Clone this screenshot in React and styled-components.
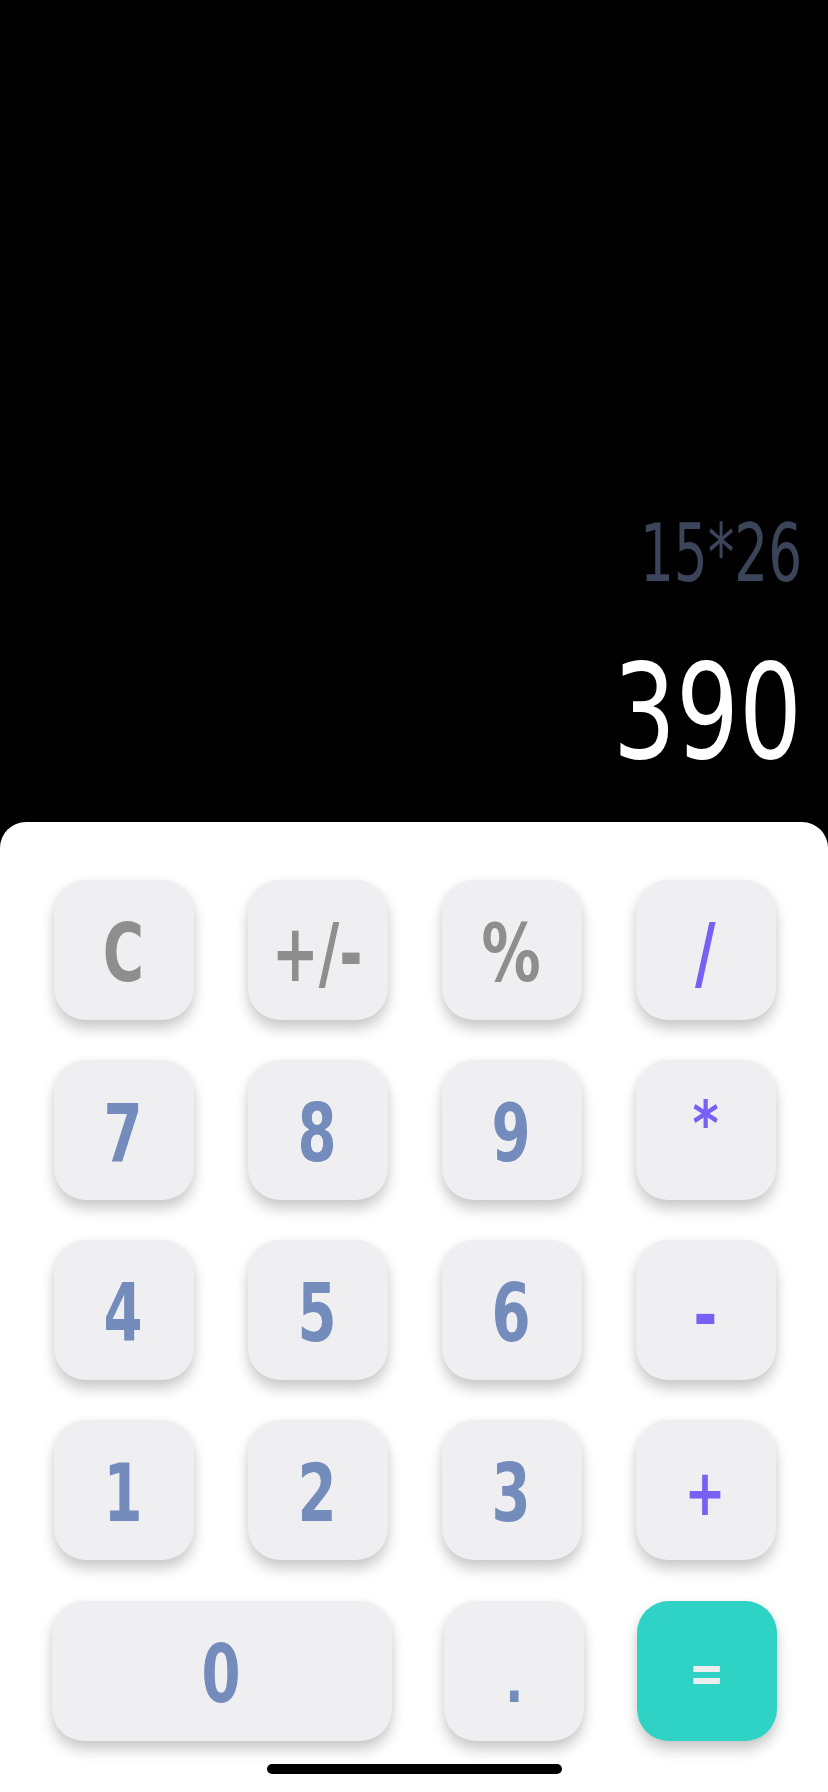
import React from "react";
import styled, { createGlobalStyle } from "styled-components";

const GlobalStyle = createGlobalStyle`
  html, body {
    margin: 0;
    padding: 0;
    background: #000;
  }
  body {
    font-family: "Liberation Sans Narrow", "DejaVu Sans Condensed", "Liberation Sans", sans-serif;
  }
`;

const Screen = styled.div`
  width: 828px;
  height: 1792px;
  background: #000;
  display: flex;
  flex-direction: column;
  overflow: hidden;
`;

// 결과 표시 영역
const Display = styled.div`
  height: 822px;
  box-sizing: border-box;
  display: flex;
  flex-direction: column;
  justify-content: flex-end;
  align-items: flex-end;
  padding: 0 26px 44px 0;
`;

const Expression = styled.div`
  font-size: 80px;
  line-height: 1;
  color: #3b4559;
  margin-bottom: 53px;
  transform: scaleX(0.74);
  transform-origin: right center;
`;

const Result = styled.div`
  font-size: 131px;
  line-height: 1;
  color: #fff;
  transform: scaleX(0.84);
  transform-origin: right center;
`;

const Panel = styled.div`
  flex: 1;
  background: #fff;
  border-radius: 26px 26px 0 0;
  padding-top: 58px;
  display: flex;
  flex-direction: column;
  align-items: center;
`;

const Grid = styled.div`
  width: 722px;
  display: grid;
  grid-template-columns: repeat(4, 140px);
  justify-content: space-between;
  row-gap: 40px;
  margin-left: 1px;
`;

const LastRow = styled.div`
  width: 725px;
  display: flex;
  justify-content: space-between;
  margin-top: 41px;
`;

const Key = styled.button`
  width: ${(p) => (p.wide ? "340px" : "140px")};
  height: 140px;
  border: none;
  border-radius: 32px;
  background: ${(p) => (p.accent ? "#2ed3c6" : "#efeff2")};
  color: ${(p) => p.color || "#748cbb"};
  box-shadow: 0 9px 14px rgba(0, 0, 0, 0.2), 0 0 8px rgba(0, 0, 0, 0.04);
  font-family: inherit;
  font-weight: bold;
  line-height: 1;
  display: flex;
  align-items: center;
  justify-content: center;
  padding: 0;
  cursor: pointer;
`;

const Label = styled.span`
  display: inline-block;
  font-size: ${(p) => p.size || 80}px;
  transform: translateY(${(p) => p.shift || 4}px) scaleX(${(p) => p.squeeze || 0.78});
`;

const HomeBar = styled.div`
  width: 295px;
  height: 10px;
  border-radius: 5px;
  background: #000;
  margin-top: 23px;
`;

const GRAY = "#8e8e8e";
const PURPLE = "#7761f5";

const keys = [
  { label: "C", color: GRAY },
  { label: "+/-", color: GRAY },
  { label: "%", color: GRAY, squeeze: 0.82 },
  { label: "/", color: PURPLE },
  { label: "7" },
  { label: "8" },
  { label: "9" },
  { label: "*", color: PURPLE, size: 62, shift: -6, squeeze: 0.9 },
  { label: "4" },
  { label: "5" },
  { label: "6" },
  { label: "-", color: PURPLE, size: 72, shift: 4, squeeze: 0.9 },
  { label: "1" },
  { label: "2" },
  { label: "3" },
  { label: "+", color: PURPLE, size: 64, shift: 3, squeeze: 0.85 },
];

const App = () => {
  return (
    <>
      <GlobalStyle />
      <Screen>
        <Display>
          <Expression>15*26</Expression>
          <Result>390</Result>
        </Display>
        <Panel>
          <Grid>
            {keys.map((k) => (
              <Key key={k.label} color={k.color}>
                <Label size={k.size} shift={k.shift} squeeze={k.squeeze}>
                  {k.label}
                </Label>
              </Key>
            ))}
          </Grid>
          <LastRow>
            <Key wide>
              <Label>0</Label>
            </Key>
            <Key>
              <Label size={60} shift={10} squeeze={0.9}>.</Label>
            </Key>
            <Key accent color="#ededf0">
              <Label size={52} shift={2} squeeze={0.9}>=</Label>
            </Key>
          </LastRow>
          <HomeBar />
        </Panel>
      </Screen>
    </>
  );
};

export default App;
